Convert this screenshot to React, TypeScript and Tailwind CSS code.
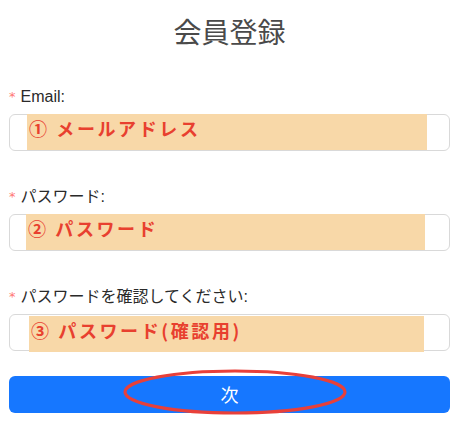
import React from "react";

const font = { fontFamily: '"Liberation Sans", "Noto Sans CJK JP", sans-serif' };

function Field({
  label,
  hl,
  text,
  mt,
}: {
  label: string;
  hl: string;
  text: string;
  mt: string;
}) {
  return (
    <div className={mt}>
      <div className="flex h-[22px] items-center text-[16px] text-[#2a2a2a]">
        <span className="mr-[5px] text-[13px] text-[#ff7875]" style={{ fontFamily: "'DejaVu Sans', sans-serif" }}>*</span>
        <span>{label}</span>
      </div>
      <div className="relative mt-[6px] h-[37px] rounded-[6px] border border-[#d9d9d9] bg-white">
        <div className={`absolute ${hl} flex items-start bg-[#f8d8a8] pl-[2px] pt-[1px] text-[18px] font-bold tracking-[2.6px] text-[#e8402f]`} style={{ fontFamily: '"Noto Sans CJK JP", sans-serif' }}>
          {text}
        </div>
      </div>
    </div>
  );
}

export default function App() {
  return (
    <div className="relative h-[424px] w-[463px] bg-white px-[9px] pr-[13px]" style={font}>
      <div className="pt-[11px] text-center text-[28px] leading-[40px] text-[#4a4a4a]" style={{ fontFamily: '"Noto Sans CJK JP", sans-serif' }}>
        会員登録
      </div>
      <Field mt="mt-[35px]" label="Email:" hl="left-[17px] top-[-1px] h-[36px] w-[400px]" text="① メールアドレス" />
      <Field mt="mt-[35px]" label="パスワード:" hl="left-[16px] top-[-1px] h-[36px] w-[399px]" text="② パスワード" />
      <Field mt="mt-[35px]" label="パスワードを確認してください:" hl="left-[19px] top-[1px] h-[36px] w-[395px]" text="③ パスワード(確認用)" />
      <div className="relative mt-[25px]">
        <button className="flex h-[37px] w-full items-center justify-center rounded-[6px] bg-[#1677ff] text-[18px] text-white" style={{ fontFamily: '"Noto Sans CJK JP", sans-serif' }}>
          次
        </button>
        <svg className="pointer-events-none absolute left-[114px] top-[-7px]" width="224" height="46" viewBox="0 0 224 46">
          <ellipse cx="112" cy="23" rx="110" ry="21" fill="none" stroke="#e8403a" strokeWidth="3.2" />
        </svg>
      </div>
    </div>
  );
}
